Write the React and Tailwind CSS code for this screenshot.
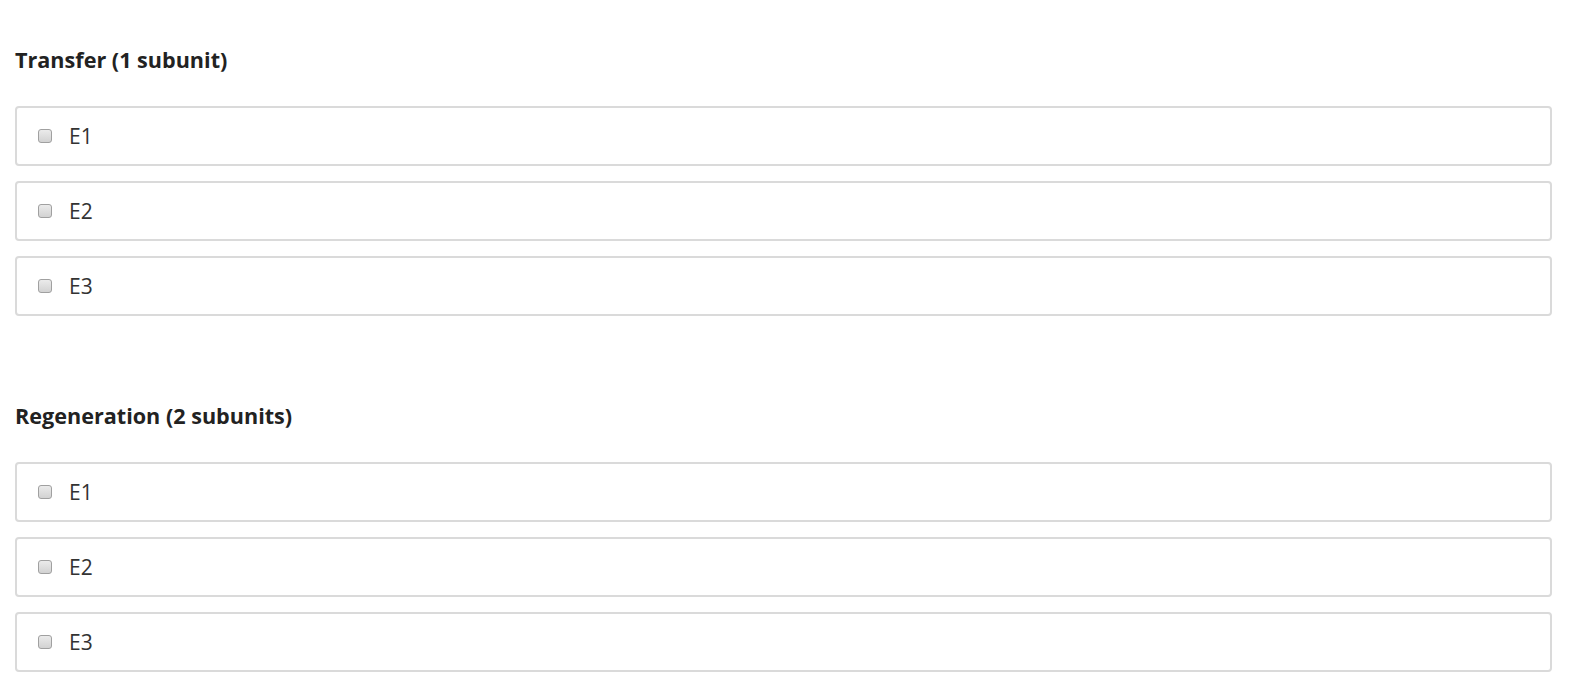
export default function App() {
  const sections = [
    { title: "Transfer (1 subunit)", items: ["E1", "E2", "E3"] },
    { title: "Regeneration (2 subunits)", items: ["E1", "E2", "E3"] },
  ];
  return (
    <div className="min-h-[697px] bg-white pt-[46px] pl-[15px] pr-[17px]" style={{ fontFamily: '"Open Sans", sans-serif' }}>
      {sections.map((s, i) => (
        <div key={i} className={i > 0 ? "mt-[86px]" : ""}>
          <h2 className="text-[21.6px] font-bold leading-[28px] text-[#222]">{s.title}</h2>
          <div className="mt-[32px] flex flex-col gap-[15px]">
            {s.items.map((it) => (
              <label key={it} className="flex h-[60px] items-center rounded-[4px] border-2 border-[#dadada] pl-[21px]">
                <span className="h-[14px] w-[14px] rounded-[3px] border border-[#a0a0a0] bg-gradient-to-b from-[#ebebeb] to-[#d2d2d2]" />
                <span className="ml-[17px] text-[21px] leading-[24px] text-[#333]">{it}</span>
              </label>
            ))}
          </div>
        </div>
      ))}
    </div>
  );
}
